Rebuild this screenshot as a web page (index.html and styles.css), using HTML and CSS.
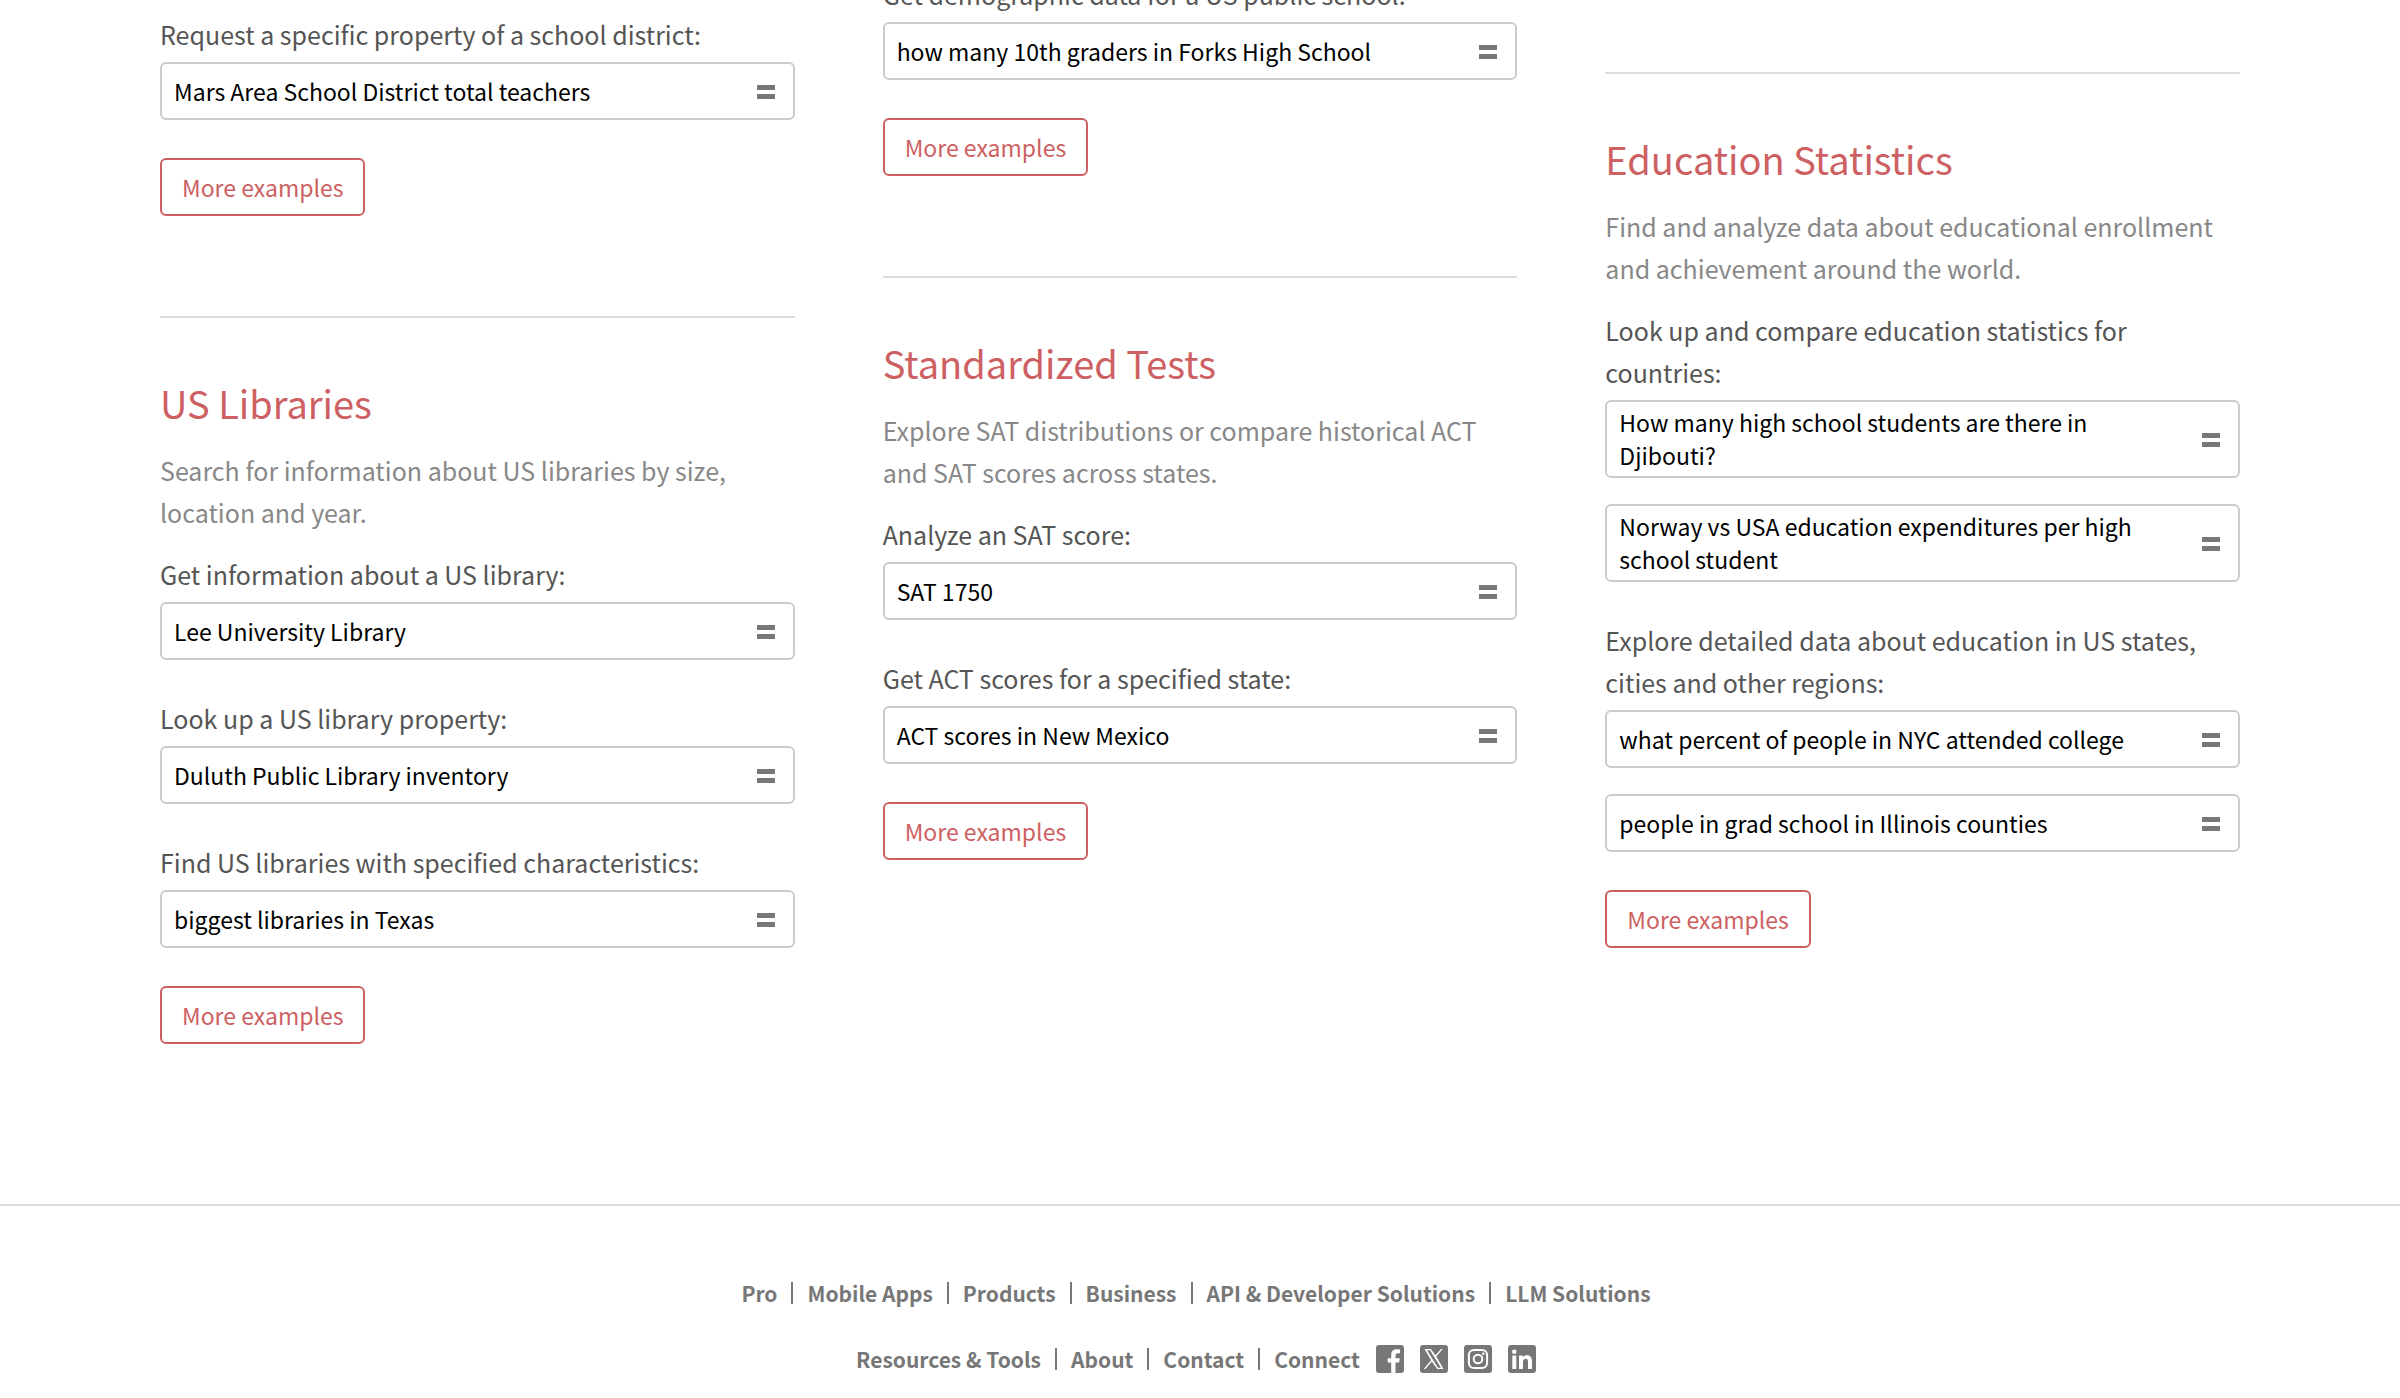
FILE: index.html
```html
<!DOCTYPE html>
<html lang="en">
<head>
<meta charset="utf-8">
<meta name="viewport" content="width=device-width, initial-scale=1">
<title>Education Examples</title>
<link rel="stylesheet" href="styles.css">
</head>
<body>
<svg class="sprite" aria-hidden="true">
  <symbol id="equals" viewBox="0 0 18 16"><path d="M0 2h18v5H0zM0 11h18v5H0z"/></symbol>
</svg>
<main class="topics">
  <div class="column column-first">
    <section class="topic">
      <div class="group">
        <p class="label">Request a specific property of a school district:</p>
        <a class="query" href="#"><span>Mars Area School District total teachers</span><svg class="equals"><use href="#equals"/></svg></a>
      </div>
      <a class="more" href="#">More examples</a>
    </section>
    <section class="topic">
      <h2>US Libraries</h2>
      <p class="intro">Search for information about US libraries by size, location and year.</p>
      <div class="group">
        <p class="label">Get information about a US library:</p>
        <a class="query" href="#"><span>Lee University Library</span><svg class="equals"><use href="#equals"/></svg></a>
      </div>
      <div class="group">
        <p class="label">Look up a US library property:</p>
        <a class="query" href="#"><span>Duluth Public Library inventory</span><svg class="equals"><use href="#equals"/></svg></a>
      </div>
      <div class="group">
        <p class="label">Find US libraries with specified characteristics:</p>
        <a class="query" href="#"><span>biggest libraries in Texas</span><svg class="equals"><use href="#equals"/></svg></a>
      </div>
      <a class="more" href="#">More examples</a>
    </section>
  </div>
  <div class="column">
    <section class="topic">
      <div class="group">
        <p class="label">Get demographic data for a US public school:</p>
        <a class="query" href="#"><span>how many 10th graders in Forks High School</span><svg class="equals"><use href="#equals"/></svg></a>
      </div>
      <a class="more" href="#">More examples</a>
    </section>
    <section class="topic">
      <h2>Standardized Tests</h2>
      <p class="intro">Explore SAT distributions or compare historical ACT and SAT scores across states.</p>
      <div class="group">
        <p class="label">Analyze an SAT score:</p>
        <a class="query" href="#"><span>SAT 1750</span><svg class="equals"><use href="#equals"/></svg></a>
      </div>
      <div class="group">
        <p class="label">Get ACT scores for a specified state:</p>
        <a class="query" href="#"><span>ACT scores in New Mexico</span><svg class="equals"><use href="#equals"/></svg></a>
      </div>
      <a class="more" href="#">More examples</a>
    </section>
  </div>
  <div class="column column-last">
    <section class="topic">
      <h2>Education Statistics</h2>
      <p class="intro">Find and analyze data about educational enrollment and achievement around the world.</p>
      <div class="group">
        <p class="label">Look up and compare education statistics for countries:</p>
        <a class="query" href="#"><span>How many high school students are there in Djibouti?</span><svg class="equals"><use href="#equals"/></svg></a>
        <a class="query" href="#"><span>Norway vs USA education expenditures per high school student</span><svg class="equals"><use href="#equals"/></svg></a>
      </div>
      <div class="group">
        <p class="label">Explore detailed data about education in US states, cities and other regions:</p>
        <a class="query" href="#"><span>what percent of people in NYC attended college</span><svg class="equals"><use href="#equals"/></svg></a>
        <a class="query" href="#"><span>people in grad school in Illinois counties</span><svg class="equals"><use href="#equals"/></svg></a>
      </div>
      <a class="more" href="#">More examples</a>
    </section>
  </div>
</main>
<footer class="footer">
  <ul class="links">
    <li><a href="#">Pro</a></li>
    <li><a href="#">Mobile Apps</a></li>
    <li><a href="#">Products</a></li>
    <li><a href="#">Business</a></li>
    <li><a href="#">API &amp; Developer Solutions</a></li>
    <li><a href="#">LLM Solutions</a></li>
  </ul>
  <div class="footer-row">
    <ul class="links">
      <li><a href="#">Resources &amp; Tools</a></li>
      <li><a href="#">About</a></li>
      <li><a href="#">Contact</a></li>
      <li><a href="#">Connect</a></li>
    </ul>
    <div class="social">
      <a href="#" aria-label="Facebook"><svg viewBox="0 0 28 28">
        <rect class="tile" width="28" height="28" rx="3"/>
        <path class="mark" d="M15.200 28V17.400h-3.500v-4.200h3.500v-3.100c0-3.800 2.100-5.900 5.500-5.900 1.400 0 2.300.1 3.300.3v3.700h-2c-1.900 0-2.500.9-2.500 2.400v2.600h4.300l-.7 4.200h-3.600V28z"/>
      </svg></a>
      <a href="#" aria-label="X"><svg viewBox="0 0 28 28">
        <rect class="tile" width="28" height="28" rx="3"/>
        <path class="mark" fill-rule="evenodd" d="M4.500 4h6.300l4.700 6.300L21 4h1.700l-6.400 7.400L23.500 24h-6.300l-5.300-7.600L5.400 24H3.700l7.400-8.700zM7 5.300 18 22.700h3L10 5.300z"/>
      </svg></a>
      <a href="#" aria-label="Instagram"><svg viewBox="0 0 28 28">
        <rect class="tile" width="28" height="28" rx="3"/>
        <rect class="line" x="4.900" y="4.900" width="18.200" height="18.200" rx="5"/>
        <circle class="line" cx="14" cy="14" r="4.300"/>
        <circle class="mark" cx="19.300" cy="8.700" r="1.200"/>
      </svg></a>
      <a href="#" aria-label="LinkedIn"><svg viewBox="0 0 28 28">
        <rect class="tile" width="28" height="28" rx="3"/>
        <circle class="mark" cx="6.300" cy="6.700" r="2.300"/>
        <path class="mark" d="M4.300 10.500h4V24h-4zM11 10.500h3.800v1.900c.8-1.400 2.200-2.200 4-2.200 4 0 5.200 2.500 5.200 6.300V24h-4v-6.700c0-2-.3-3.500-2.200-3.500-2 0-2.800 1.400-2.800 3.500V24h-4z"/>
      </svg></a>
    </div>
  </div>
</footer>
</body>
</html>
```
FILE: styles.css
```css
* {
  box-sizing: border-box;
}

body {
  display: flow-root;
  margin: 0;
  background: #fff;
  color: #555;
  font-family: "Noto Sans CJK SC", "Source Sans Pro", sans-serif;
  font-size: 25px;
  line-height: 42px;
}

a {
  color: inherit;
  text-decoration: none;
}

h2,
p,
ul {
  margin: 0;
  padding: 0;
}

.sprite {
  display: none;
}

/* The page is scrolled part-way down: the columns start above the window. */
.topics {
  display: grid;
  grid-template-columns: repeat(3, minmax(0, 1fr));
  gap: 88px;
  margin-top: -27px;
  padding: 0 160px 160px;
  border-bottom: 2px solid #ddd;
}

.column-first {
  padding-top: 40px;
}

.column-last {
  padding-top: 99px;
}

.topic + .topic,
.column-last .topic {
  border-top: 2px solid #ddd;
}

.topic + .topic {
  margin-top: 100px;
}

h2 {
  padding: 57px 0 18px;
  color: #cd6062;
  font-size: 38px;
  font-weight: 400;
  line-height: 56px;
}

.intro {
  margin-bottom: 20px;
  color: #888;
}

.group {
  margin-bottom: 37px;
}

.label {
  margin-bottom: 7px;
}

.query {
  display: flex;
  align-items: center;
  justify-content: space-between;
  gap: 24px;
  min-height: 58px;
  padding: 4px 18px 4px 12px;
  border: 2px solid #ccc;
  border-radius: 6px;
  color: #000;
  font-size: 23px;
  line-height: 33px;
}

.query + .query {
  margin-top: 26px;
}

.equals {
  flex: none;
  width: 18px;
  height: 16px;
  fill: #777;
}

.more {
  display: block;
  width: fit-content;
  margin-top: 38px;
  padding: 6px 20px;
  border: 2px solid #cd6062;
  border-radius: 6px;
  color: #cd6062;
  font-size: 23px;
}

.footer {
  padding: 66px 8px 8px 0;
  color: #777;
  font-size: 21px;
  font-weight: 700;
  line-height: 42px;
}

.links {
  display: flex;
  flex-wrap: wrap;
  justify-content: center;
  list-style: none;
}

.links li {
  display: flex;
  align-items: center;
}

.links li + li::before {
  width: 2px;
  height: 22px;
  margin: 0 14px;
  background: #777;
  content: "";
}

.footer-row {
  display: flex;
  flex-wrap: wrap;
  align-items: center;
  justify-content: center;
  gap: 16px;
  margin-top: 24px;
}

.social {
  display: flex;
  gap: 16px;
}

.social svg {
  display: block;
  width: 28px;
  height: 28px;
}

.tile {
  fill: #777;
}

.mark {
  fill: #fff;
}

.line {
  fill: none;
  stroke: #fff;
  stroke-width: 2;
}
```
